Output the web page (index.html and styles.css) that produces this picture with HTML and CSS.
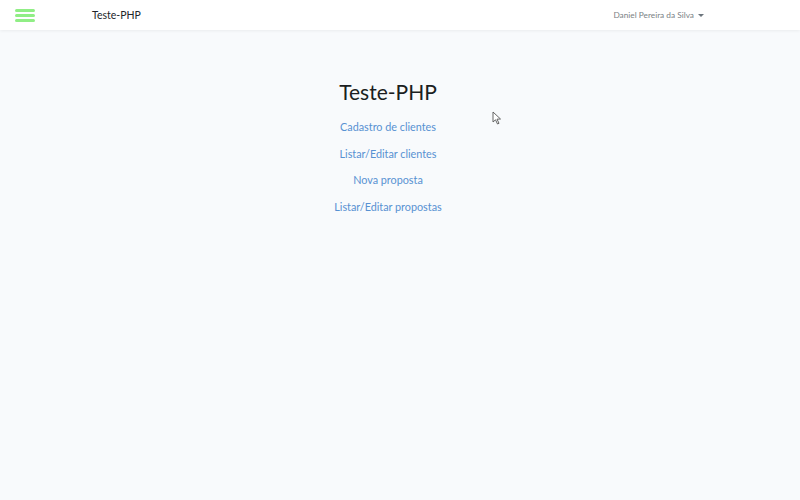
FILE: index.html
```html
<!DOCTYPE html>
<html lang="pt">
<head>
<meta charset="utf-8">
<title>Teste-PHP</title>
<link rel="stylesheet" href="styles.css">
</head>
<body>
<nav class="navbar">
  <div class="nav-left">
    <span class="burger"><span></span><span></span><span></span></span>
    <a class="brand" href="#">Teste-PHP</a>
  </div>
  <a class="user" href="#">Daniel Pereira da Silva <span class="caret"></span></a>
</nav>
<main class="content">
  <h1 class="title">Teste-PHP</h1>
  <ul class="links">
    <li><a href="#">Cadastro de clientes</a></li>
    <li><a href="#">Listar/Editar clientes</a></li>
    <li><a href="#">Nova proposta</a></li>
    <li><a href="#">Listar/Editar propostas</a></li>
  </ul>
</main>
<svg class="cursor" width="10" height="14" viewBox="0 0 10 14"><path d="M1 1 L1 11 L3.5 8.8 L5.5 13 L7 12.3 L5 8.2 L8.5 8 Z" fill="#fff" stroke="#555" stroke-width="0.9"/></svg>
</body>
</html>
```
FILE: styles.css
```css
* { box-sizing: border-box; }
html, body { margin: 0; height: 100%; }
body {
  background: #f8fafc;
  font-family: "Lato", "Open Sans", sans-serif;
  color: #212529;
  position: relative;
}
.navbar {
  height: 30px;
  background: #fff;
  box-shadow: 0 1px 3px rgba(0,0,0,0.06);
  display: flex;
  align-items: center;
  justify-content: space-between;
  padding: 0 96px 0 15px;
}
.nav-left { display: flex; align-items: center; }
.burger {
  display: flex;
  flex-direction: column;
  gap: 2px;
  width: 20px;
}
.burger span {
  display: block;
  height: 3px;
  background: #90ee85;
  border-radius: 2px;
}
.brand {
  margin-left: 57px;
  font-size: 10.5px;
  color: #212529;
  text-decoration: none;
}
.user {
  font-size: 8.3px;
  color: #7a7f85;
  text-decoration: none;
  display: flex;
  align-items: center;
}
.caret {
  display: inline-block;
  margin-left: 4px;
  border-left: 3px solid transparent;
  border-right: 3px solid transparent;
  border-top: 3px solid #6c757d;
}
.content {
  display: flex;
  flex-direction: column;
  align-items: center;
  padding-top: 49px;
  padding-right: 24px;
}
.title {
  margin: 0;
  font-weight: 400;
  font-size: 21px;
  line-height: 26px;
  color: #1b1e21;
}
.links {
  list-style: none;
  margin: 14px 0 0;
  padding: 0;
  display: flex;
  flex-direction: column;
  align-items: center;
  gap: 10px;
}
.links a {
  display: block;
  font-size: 10.8px;
  line-height: 16.5px;
  color: #5791d2;
  text-decoration: none;
}
.cursor {
  position: absolute;
  left: 492px;
  top: 111px;
}
```
